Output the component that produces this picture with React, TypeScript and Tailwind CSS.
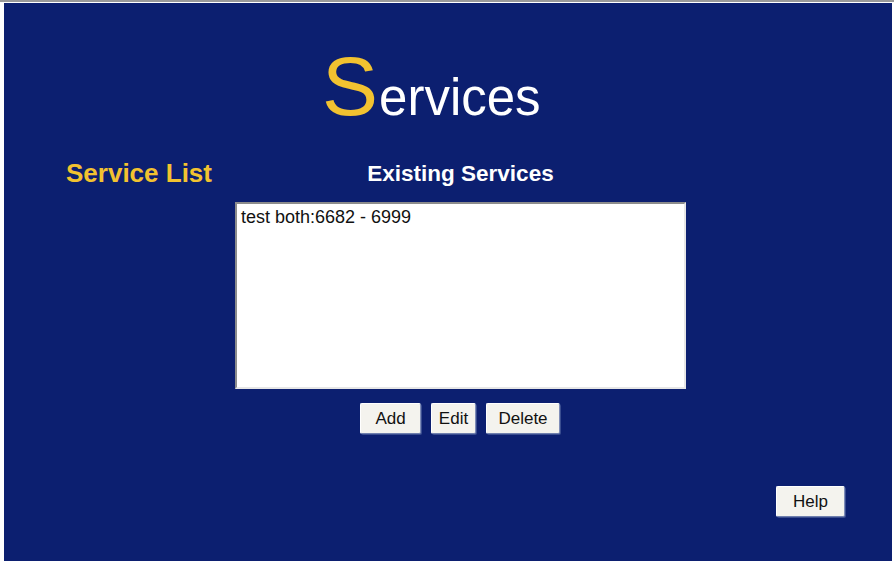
const arial = { fontFamily: '"Liberation Sans", Arial, sans-serif' };

const btn =
  'h-[31px] bg-[#f4f3ee] border border-t-[#ffffff] border-l-[#ffffff] border-r-[#7f8db8] border-b-[#6f7fae] rounded-[2px] shadow-[1px_1px_0_#3a4d8f] text-[17px] text-[#111] leading-none flex items-center justify-center';

export default function App() {
  return (
    <div
      className="w-[894px] h-[564px] bg-white border-t-[2px] border-t-[#9a9a9a] pt-[1px] pl-[4px] pr-[2px] pb-[3px]"
      style={arial}
    >
      <div className="w-full h-full bg-[#0c1f70] flex flex-col">
        {/* page title */}
        <div className="pt-[41px] pl-[318px] flex items-baseline leading-none">
          <span className="text-[#f2c230] text-[84px] leading-none">S</span>
          <span className="text-white text-[51px] leading-none ml-[1px]">ervices</span>
        </div>

        <div className="flex mt-[32px]">
          <div className="w-[231px] pl-[62px]">
            <h2 className="text-[#f2c230] font-bold text-[26px] leading-none">Service List</h2>
          </div>
          <div className="w-[451px] flex flex-col items-center">
            <h3 className="text-white font-bold text-[22.5px] leading-none mt-[3px]">Existing Services</h3>
            <div className="mt-[16px] w-[451px] h-[187px] bg-white border-2 border-t-[#8c8c8c] border-l-[#8c8c8c] border-r-[#e6e6e6] border-b-[#e6e6e6] px-[4px] pt-[4px]">
              <div className="text-[18px] leading-none text-[#111]">test both:6682 - 6999</div>
            </div>
            <div className="flex gap-[10px] mt-[14px] ml-[-1px]">
              <button className={`${btn} w-[61px]`}>Add</button>
              <button className={`${btn} w-[45px]`}>Edit</button>
              <button className={`${btn} w-[74px]`}>Delete</button>
            </div>
          </div>
        </div>

        <div className="flex justify-end pr-[47px] mt-[52px]">
          <button className={`${btn} w-[69px]`}>Help</button>
        </div>
      </div>
    </div>
  );
}
